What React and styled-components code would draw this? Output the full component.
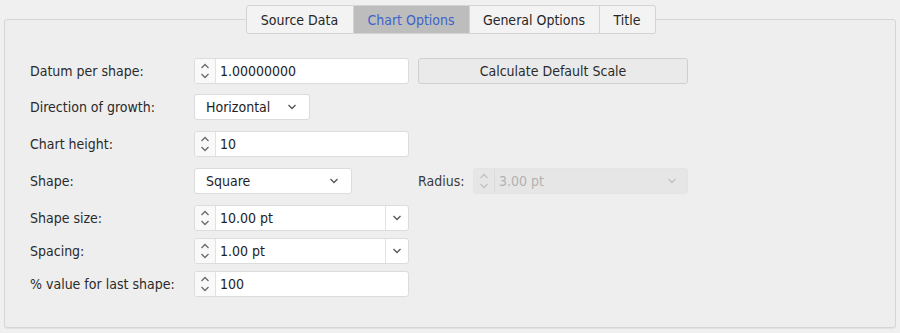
import React from "react";
import styled, { createGlobalStyle } from "styled-components";

const Global = createGlobalStyle`
  body {
    margin: 0;
    background: #f0f0f0;
    font-family: "DejaVu Sans Condensed", "Liberation Sans", Arial, sans-serif;
    font-size: 14px;
    color: #1e1e1e;
  }
`;

const Page = styled.div`
  width: 900px;
  height: 333px;
  padding: 5px 4px 0 4px;
  box-sizing: border-box;
`;

const TabBar = styled.div`
  display: flex;
  justify-content: center;
  position: relative;
  z-index: 1;
  margin-bottom: -15px;
  padding-left: 1px;
`;

const Tab = styled.div`
  height: 29px;
  box-sizing: border-box;
  display: flex;
  align-items: center;
  justify-content: center;
  border: 1px solid #d4d4d4;
  border-left: ${(p) => (p.$first ? "1px solid #d4d4d4" : "none")};
  border-radius: ${(p) => (p.$first ? "3px 0 0 3px" : p.$last ? "0 3px 3px 0" : "0")};
  background: ${(p) => (p.$active ? "#bdbdbd" : "#f3f3f3")};
  color: ${(p) => (p.$active ? "#3d63c9" : "#262626")};
  width: ${(p) => p.$w}px;
`;

const Pane = styled.div`
  height: 309px;
  box-sizing: border-box;
  border: 1px solid #d6d6d6;
  border-radius: 3px;
  background: #eeeeee;
  box-shadow: 0 1px 1px rgba(0, 0, 0, 0.06);
  padding: 38px 0 0 25px;
`;

const Row = styled.div`
  display: grid;
  grid-template-columns: 155px 215px 270px;
  column-gap: 9px;
  align-items: center;
  height: 26px;
  margin-top: ${(p) => p.$mt || 0}px;
`;

const Label = styled.div`
  color: ${(p) => (p.$dim ? "#3a3a3a" : "#2a2a2a")};
  white-space: nowrap;
`;

const Field = styled.div`
  display: flex;
  align-items: stretch;
  height: 26px;
  box-sizing: border-box;
  width: ${(p) => (p.$w ? `${p.$w}px` : "100%")};
  border: 1px solid ${(p) => (p.$disabled ? "#e4e4e4" : "#dcdcdc")};
  border-radius: 3px;
  background: ${(p) => (p.$disabled ? "#e6e6e6" : "#ffffff")};
  color: ${(p) => (p.$disabled ? "#b2b2b2" : "#1e1e1e")};
`;

const Spin = styled.div`
  width: 20px;
  display: flex;
  align-items: center;
  justify-content: center;
  border-right: 1px solid ${(p) => (p.$disabled ? "#dadada" : "#e2e2e2")};
  background: ${(p) => (p.$disabled ? "#e6e6e6" : "#f9f9f9")};
  border-radius: 3px 0 0 3px;
`;

const Value = styled.div`
  flex: 1;
  display: flex;
  align-items: center;
  padding-left: ${(p) => p.$pl ?? 4}px;
`;

const Drop = styled.div`
  width: 22px;
  display: flex;
  align-items: center;
  justify-content: center;
  border-left: ${(p) => (p.$line ? "1px solid #e2e2e2" : "none")};
  margin-right: ${(p) => p.$mr || 0}px;
`;

const Button = styled.div`
  height: 26px;
  box-sizing: border-box;
  border: 1px solid #cfcfcf;
  border-radius: 3px;
  background: #eaeaea;
  display: flex;
  align-items: center;
  justify-content: center;
  color: #2a2a2a;
`;

const RadiusCell = styled.div`
  display: flex;
  align-items: center;
  justify-content: space-between;
`;

const SpinIcon = ({ color = "#6a6a6a" }) => (
  <svg width="10" height="18" viewBox="0 0 10 18">
    <path d="M1.5 6 L5 2.5 L8.5 6" fill="none" stroke={color} strokeWidth="1.3" />
    <path d="M1.5 12 L5 15.5 L8.5 12" fill="none" stroke={color} strokeWidth="1.3" />
  </svg>
);

const Chevron = ({ color = "#555" }) => (
  <svg width="10" height="6" viewBox="0 0 10 6">
    <path d="M1.5 1 L5 4.5 L8.5 1" fill="none" stroke={color} strokeWidth="1.3" />
  </svg>
);

const SpinBox = ({ value, combo, disabled, w }) => (
  <Field $disabled={disabled} $w={w}>
    <Spin $disabled={disabled}>
      <SpinIcon color={disabled ? "#c2c2c2" : "#6a6a6a"} />
    </Spin>
    <Value>{value}</Value>
    {combo && (
      <Drop $line={!disabled} $mr={disabled ? 4 : 0}>
        <Chevron color={disabled ? "#c2c2c2" : "#555"} />
      </Drop>
    )}
  </Field>
);

const Combo = ({ value, w }) => (
  <Field $w={w}>
    <Value $pl={11}>{value}</Value>
    <Drop $mr={6}>
      <Chevron />
    </Drop>
  </Field>
);

export default function App() {
  return (
    <Page>
      <Global />
      <TabBar>
        <Tab $first $w={108}>Source Data</Tab>
        <Tab $active $w={116}>Chart Options</Tab>
        <Tab $w={130}>General Options</Tab>
        <Tab $last $w={56}>Title</Tab>
      </TabBar>
      <Pane>
        <Row>
          <Label>Datum per shape:</Label>
          <SpinBox value="1.00000000" />
          <Button>Calculate Default Scale</Button>
        </Row>
        <Row $mt={10}>
          <Label>Direction of growth:</Label>
          <Combo value="Horizontal" w={116} />
        </Row>
        <Row $mt={11}>
          <Label>Chart height:</Label>
          <SpinBox value="10" />
        </Row>
        <Row $mt={11}>
          <Label>Shape:</Label>
          <Combo value="Square" w={158} />
          <RadiusCell>
            <Label $dim>Radius:</Label>
            <SpinBox value="3.00 pt" combo disabled w={215} />
          </RadiusCell>
        </Row>
        <Row $mt={11}>
          <Label>Shape size:</Label>
          <SpinBox value="10.00 pt" combo />
        </Row>
        <Row $mt={7}>
          <Label>Spacing:</Label>
          <SpinBox value="1.00 pt" combo />
        </Row>
        <Row $mt={7}>
          <Label>% value for last shape:</Label>
          <SpinBox value="100" />
        </Row>
      </Pane>
    </Page>
  );
}
